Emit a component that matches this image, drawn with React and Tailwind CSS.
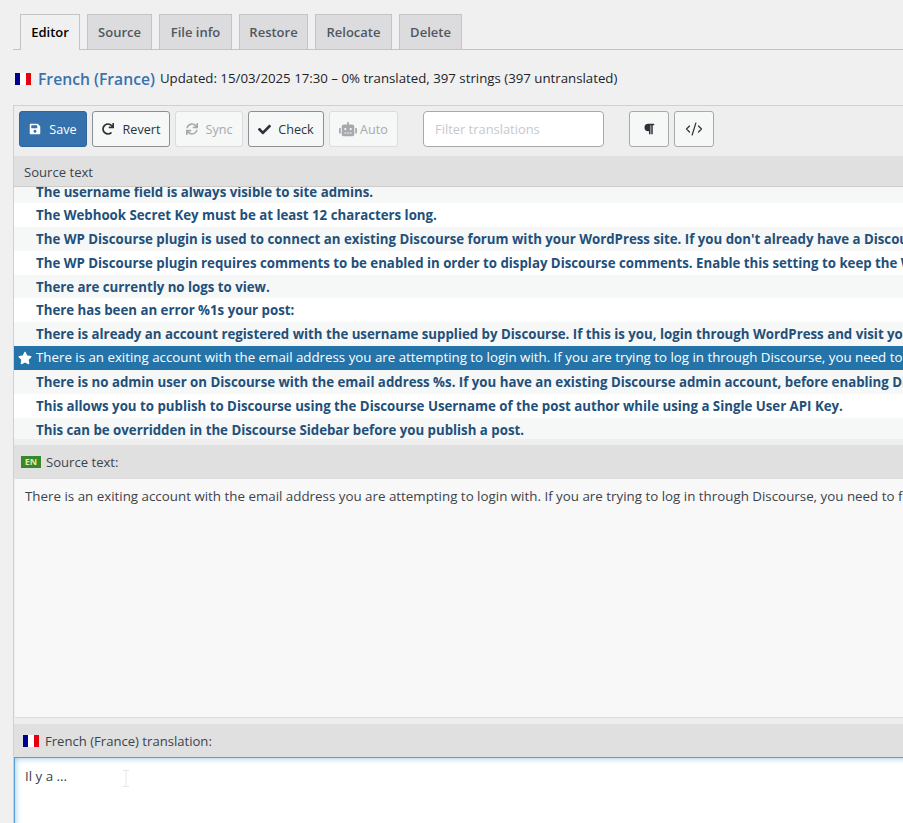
import { FaSave, FaRedo, FaSync, FaCheck, FaRobot, FaParagraph, FaStar } from 'react-icons/fa';
import { CodeXml } from 'lucide-react';

const tabs = [
  { label: 'Source', width: 'w-[65px]' },
  { label: 'File info', width: 'w-[73px]' },
  { label: 'Restore', width: 'w-[69px]' },
  { label: 'Relocate', width: 'w-[77px]' },
  { label: 'Delete', width: 'w-[63px]' },
];

const rows = [
  'The Webhook Secret Key must be at least 12 characters long.',
  "The WP Discourse plugin is used to connect an existing Discourse forum with your WordPress site. If you don't already have a Discourse forum, you can find out more about it here.",
  'The WP Discourse plugin requires comments to be enabled in order to display Discourse comments. Enable this setting to keep the WordPress comments open on your posts.',
  'There are currently no logs to view.',
  'There has been an error %1s your post:',
  'There is already an account registered with the username supplied by Discourse. If this is you, login through WordPress and visit your profile page to sync your account.',
];

const rowsAfter = [
  'There is no admin user on Discourse with the email address %s. If you have an existing Discourse admin account, before enabling Discourse Connect you need to update it.',
  'This allows you to publish to Discourse using the Discourse Username of the post author while using a Single User API Key.',
  'This can be overridden in the Discourse Sidebar before you publish a post.',
];

const selectedText =
  'There is an exiting account with the email address you are attempting to login with. If you are trying to log in through Discourse, you need to first login through WordPress, visit your profile page.';

function Flag() {
  return (
    <span className="flex h-[12px] w-[16px] shrink-0">
      <span className="w-1/3 bg-[#00008f]" />
      <span className="w-1/3 bg-white" />
      <span className="w-1/3 bg-[#e8000f]" />
    </span>
  );
}

function Row({ text, odd }) {
  return (
    <div className={`h-[23.8px] whitespace-nowrap pl-[22px] text-[13.25px] font-bold leading-[25px] text-[#22507a] ${odd ? 'bg-[#f6f7f7]' : 'bg-white'}`}>
      {text}
    </div>
  );
}

function ToolButton({ icon, label, className }) {
  return (
    <button type="button" className={`flex h-[36px] items-center justify-center rounded-[3px] border text-[12.6px] ${className}`}>
      {icon}
      {label && <span className="pt-[2px]">{label}</span>}
    </button>
  );
}

export default function App() {
  return (
    <div className="h-[823px] w-[903px] overflow-hidden bg-[#f0f0f1] text-[13px] text-[#3c434a] [font-family:'Open_Sans',sans-serif]">
      {/* Tabs */}
      <div className="ml-[13px] mt-[14px] flex h-[36px] w-[890px] gap-[7px] border-b border-[#c3c4c7] pl-[7px] font-semibold">
        <div className="flex h-[36px] w-[60px] items-center justify-center border border-b-0 border-[#c3c4c7] bg-[#f0f0f1] pt-[1px] text-black">Editor</div>
        {tabs.map((tab) => (
          <div key={tab.label} className={`flex h-[35px] items-center justify-center border border-b-0 border-[#c3c4c7] bg-[#dcdcde] pt-[2px] text-[#50575e] ${tab.width}`}>
            {tab.label}
          </div>
        ))}
      </div>

      {/* Title */}
      <div className="ml-[15px] mt-[18px] flex h-[22px] items-center">
        <Flag />
        <span className="ml-[7px] pt-[1px] text-[15.7px] font-semibold text-[#3973ac]">French (France)</span>
        <span className="ml-[5px] text-[13.25px] text-[#1d2327]">Updated: 15/03/2025 17:30 – 0% translated, 397 strings (397 untranslated)</span>
      </div>

      {/* Editor panel */}
      <div className="ml-[13px] mt-[15px] w-[1000px] border-l border-t border-[#d0d0d0] bg-[#eeeeee]">
        <div className="flex h-[50px] items-start pl-[5px] pt-[5px]">
          <ToolButton
            className="w-[68px] gap-[8px] border-[#2f659b] bg-[#3571ad] text-white"
            icon={<FaSave className="size-[12px]" />}
            label="Save"
          />
          <ToolButton
            className="ml-[5px] w-[78px] gap-[9px] border-[#8c8f94] bg-[#f6f7f7] text-[#2c3338]"
            icon={<FaRedo className="size-[12px]" />}
            label="Revert"
          />
          <ToolButton
            className="ml-[5px] w-[68px] gap-[8px] border-[#dcdcde] bg-[#f6f7f7] text-[#a7aaad]"
            icon={<FaSync className="size-[12px]" />}
            label="Sync"
          />
          <ToolButton
            className="ml-[5px] w-[76px] gap-[7px] border-[#8c8f94] bg-[#f6f7f7] text-[#2c3338]"
            icon={<FaCheck className="size-[13px]" />}
            label="Check"
          />
          <ToolButton
            className="ml-[5px] w-[69px] gap-[3px] border-[#dcdcde] bg-[#f6f7f7] text-[#a7aaad]"
            icon={<FaRobot className="h-[16px] w-[18px]" />}
            label="Auto"
          />
          <input
            readOnly
            placeholder="Filter translations"
            className="ml-[25px] h-[36px] w-[181px] rounded-[4px] border border-[#a9a9a9] bg-white px-[11px] text-[12.9px] outline-none placeholder:text-[#c8c8cc]"
          />
          <ToolButton
            className="ml-[25px] w-[40px] border-[#a9a9a9] bg-[#f6f7f7]"
            icon={<FaParagraph className="size-[12px] text-[#2c3338]" />}
          />
          <ToolButton
            className="ml-[5px] w-[40px] border-[#a9a9a9] bg-[#f6f7f7]"
            icon={<CodeXml className="size-[18px] text-[#2c3338]" strokeWidth={1.6} />}
          />
        </div>

        <div className="flex h-[30px] items-center bg-[#e0e0e0] pl-[10px] pt-[3px] text-[13.1px] text-[#3c434a]">Source text</div>

        {/* String list */}
        <div className="h-[253px] overflow-hidden border-t border-[#cccccc]">
          <div className="h-[16.2px] overflow-hidden whitespace-nowrap bg-[#f6f7f7] pl-[22px] text-[13.25px] font-bold leading-[11px] text-[#22507a]">
            The username field is always visible to site admins.
          </div>
          {rows.map((text, i) => (
            <Row key={text} text={text} odd={i % 2 === 1} />
          ))}
          <div className="flex h-[24px] items-center whitespace-nowrap bg-[#2574a9] text-[13.3px] text-white">
            <FaStar className="ml-[4px] mr-[4px] size-[14px] shrink-0" />
            {selectedText}
          </div>
          {rowsAfter.map((text, i) => (
            <Row key={text} text={text} odd={i % 2 === 0} />
          ))}
        </div>

        {/* Source text */}
        <div className="mt-[6px] flex h-[33px] items-center gap-[5px] bg-[#e0e0e0] pl-[7px] text-[13.1px]">
          <span className="flex h-[12px] w-[20px] items-center justify-center bg-[#35892b] text-[9px] font-bold leading-none text-[#e8e8a0]">EN</span>
          <span className="pt-[2px]">Source text:</span>
        </div>
        <div className="ml-px h-[240px] whitespace-nowrap border-y border-[#dcdcdc] bg-[#f8f8f8] pl-[10px] pt-[8px] text-[13.35px] leading-[18px]">
          {selectedText}
        </div>

        {/* Translation */}
        <div className="mt-[6px] flex h-[33px] items-center gap-[6px] bg-[#e0e0e0] pl-[9px] text-[13.1px]">
          <Flag />
          <span className="pt-[2px]">French (France) translation:</span>
        </div>
        <div className="relative h-[100px] border border-[#5b9dd9] bg-white pl-[10px] pt-[9px] text-[13.35px] leading-[18px] text-[#3c434a] shadow-[inset_0_0_6px_rgba(30,140,190,0.5)]">
          Il y a ...
          {/* mouse cursor left in the field */}
          <svg className="absolute left-[107px] top-[12px]" width="8" height="17" viewBox="0 0 8 17" fill="none" stroke="#e6e6e6" aria-hidden="true">
            <path d="M1 .5h6M4 .5v16M1 16.5h6" />
          </svg>
        </div>
      </div>
    </div>
  );
}
